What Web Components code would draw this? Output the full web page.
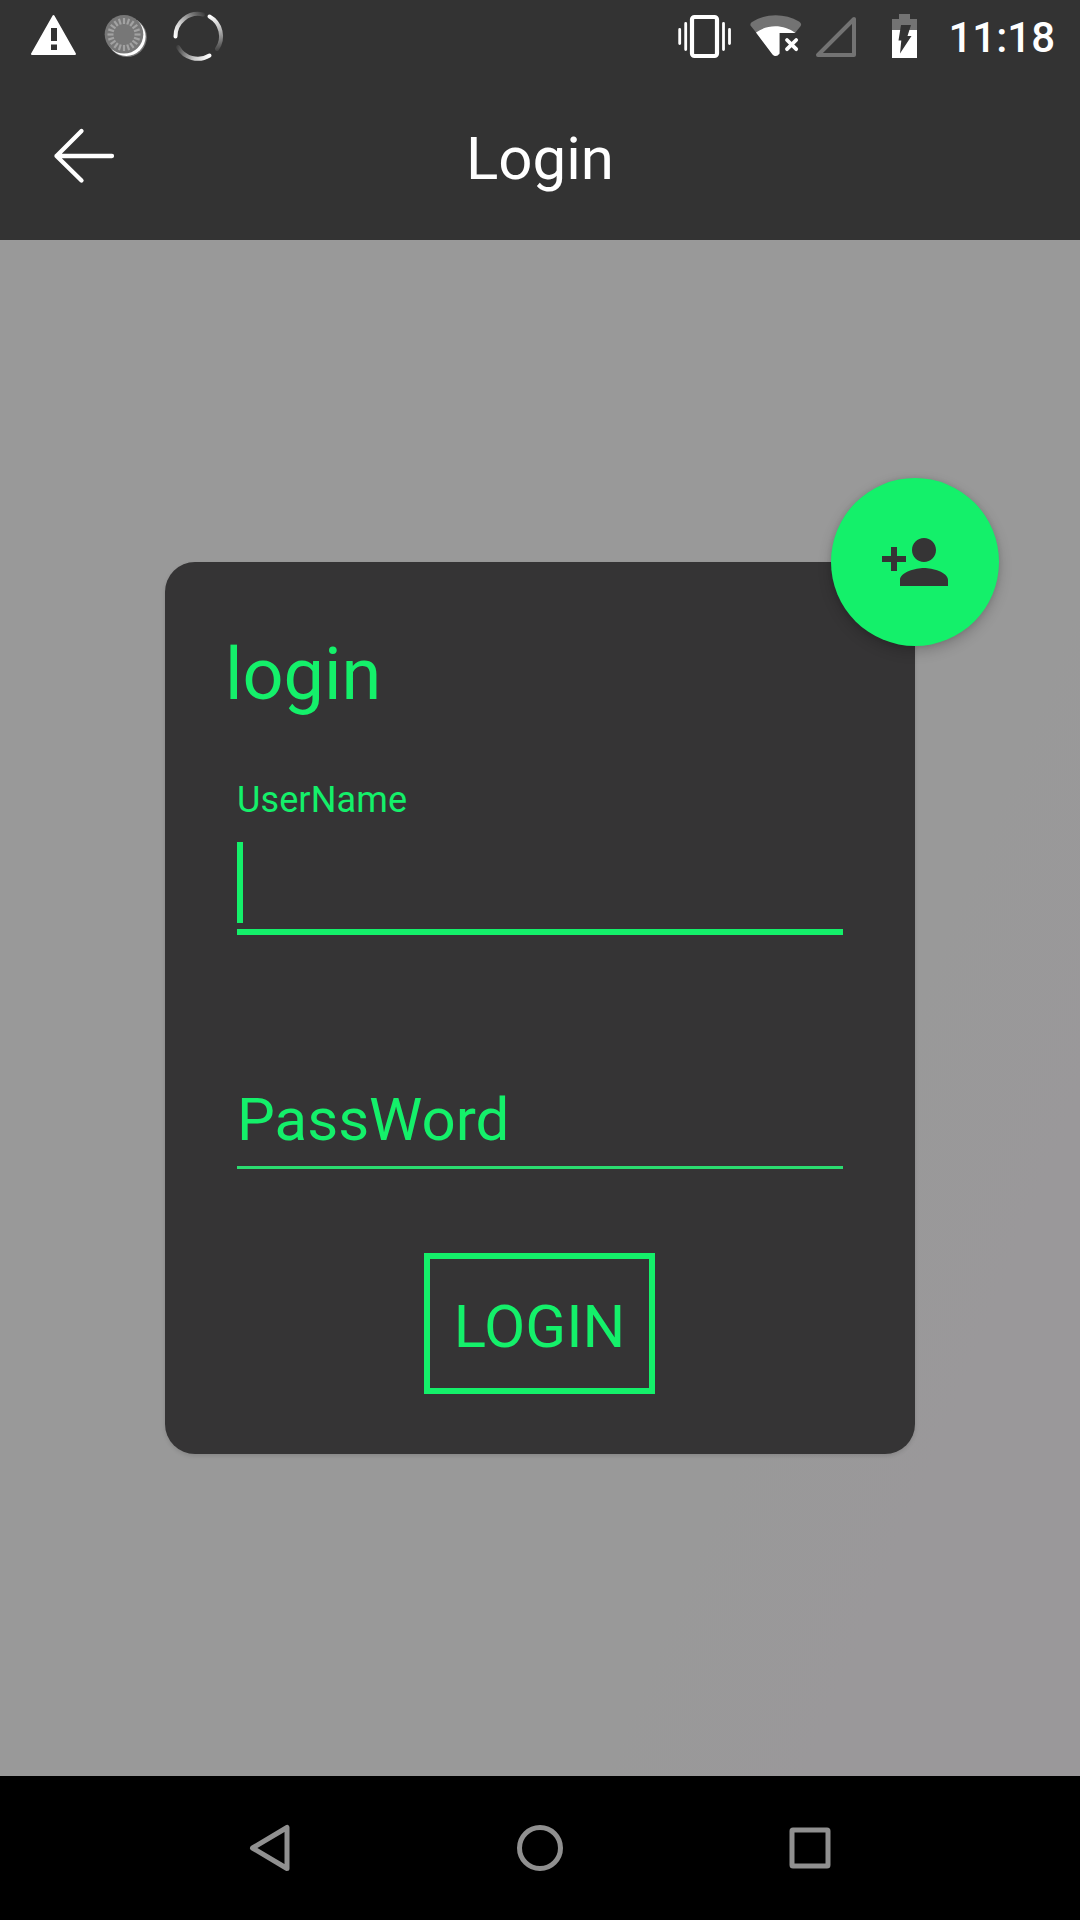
<!DOCTYPE html>
<html lang="en">
<head>
<meta charset="utf-8">
<title>Login</title>
<style>
html,body{margin:0;padding:0}
body{width:1080px;height:1920px;overflow:hidden;font-family:Roboto,"Noto Sans",sans-serif;background:#999}
</style>
</head>
<body>
<login-screen></login-screen>
<script>
const define = (name, html) => {
  const t = document.createElement('template');
  t.innerHTML = html;
  customElements.define(name, class extends HTMLElement {
    constructor() {
      super();
      this.attachShadow({mode: 'open'}).appendChild(t.content.cloneNode(true));
    }
  });
};

// Circular dial badge: ring of short radial ticks
let ticks = '';
for (let i = 0; i < 20; i++) ticks += `<path d="M124 18v6" transform="rotate(${i * 18} 124 34.5)"/>`;

define('status-bar', `
<style>
:host{display:flex;justify-content:space-between;height:72px;background:#333;color:#fff}
svg{display:block;flex:none}
.right{display:flex;padding-right:25px}
.time{width:105px;display:flex;justify-content:flex-end;font-size:42px;font-weight:500;line-height:75px;white-space:nowrap}
</style>
<svg width="240" height="72" viewBox="0 0 240 72">
  <defs>
    <linearGradient id="a" gradientUnits="userSpaceOnUse" x1="176" y1="38" x2="205" y2="14"><stop offset="0" stop-color="#fff"/><stop offset=".35" stop-color="#ccc"/><stop offset="1" stop-color="#3c3c3c"/></linearGradient>
    <linearGradient id="b" gradientUnits="userSpaceOnUse" x1="210" y1="16" x2="217" y2="52"><stop offset="0" stop-color="#fff"/><stop offset=".4" stop-color="#bbb"/><stop offset="1" stop-color="#3c3c3c"/></linearGradient>
    <linearGradient id="c" gradientUnits="userSpaceOnUse" x1="210" y1="56" x2="177" y2="45"><stop offset="0" stop-color="#fff"/><stop offset=".4" stop-color="#ccc"/><stop offset="1" stop-color="#3c3c3c"/></linearGradient>
  </defs>
  <path d="M53.5 16 75 54H32Z" fill="#fff" stroke="#fff" stroke-width="2" stroke-linejoin="round"/>
  <path d="M51 28h6v13h-6zM51 44.500h6v5.500h-6z" fill="#333"/>
  <circle cx="127" cy="37.200" r="19.800" fill="#777"/>
  <circle cx="126.300" cy="36.600" r="19.300" fill="#fff"/>
  <circle cx="124" cy="34.300" r="19.300" fill="#777"/>
  <g stroke="#a2a2a2" stroke-width="2.200">${ticks}</g>
  <g fill="none" stroke-width="4" stroke-linecap="round">
    <path d="M175.500 36.500A22.500 22.500 0 0 1 203 14.500" stroke="url(#a)"/>
    <path d="M209.500 16.500A22.500 22.500 0 0 1 217 49" stroke="url(#b)"/>
    <path d="M209.500 55.500A22.500 22.500 0 0 1 178 47" stroke="url(#c)"/>
  </g>
</svg>
<div class="right">
<svg width="290" height="72" viewBox="660 0 290 72">
  <rect x="692" y="17" width="25" height="39" rx="2.500" fill="none" stroke="#fff" stroke-width="4.200"/>
  <path d="M685.700 23.500v26M679.700 29.500v14M723.500 23.500v26M729.500 29.500v14" stroke="#fff" stroke-width="2.800" stroke-linecap="round"/>
  <path d="M750.500 25.500C750 24 751 22.500 752.500 21.700 766 13 785 13 799 21.500 801 22.800 801.800 24.500 800.500 26.200L795 33H779.500V54Q775.500 58 772.500 54L756.500 33Z" fill="#737373"/>
  <path d="M756 32.500C767 24 784 24 795.500 33H779.500V53.500Q776 58 772.500 54.500Z" fill="#fff"/>
  <path d="M787 40l9.200 9.200M796.200 40l-9.200 9.200" stroke="#fff" stroke-width="3.800" stroke-linecap="round"/>
  <path d="M854 19v36h-36Z" fill="none" stroke="#737373" stroke-width="4" stroke-linejoin="round"/>
  <path d="M899 14h11v5h7v11.500h-25V19h7z" fill="#737373"/>
  <path d="M892 30h25v28h-25z" fill="#fff"/>
  <path d="M901 25h10l-3.500 11h4L900 53.500 901.300 40.500H898.500Z" fill="#333"/>
</svg>
<span class="time">11:18</span>
</div>`);

define('title-bar', `
<style>
:host{display:grid;grid-template-columns:168px 1fr 168px;height:168px;background:#333;color:#fff}
svg{display:block}
h1{margin:0;padding-top:5px;font-size:60px;font-weight:400;line-height:163px;text-align:center}
</style>
<svg width="168" height="168" viewBox="0 72 168 168"><path d="M81.500 131 56.500 156l25 24.500M56.500 156h55.500" fill="none" stroke="#fff" stroke-width="4.300" stroke-linecap="round" stroke-linejoin="round"/></svg>
<h1><slot></slot></h1>`);

define('text-field', `
<style>
:host{display:flex;flex-direction:column;width:606px;color:#14f06a}
.label{font-size:60px;line-height:71px;height:71px;padding-bottom:11px;white-space:nowrap}
.line{height:3px;background:#2bdc70}
.caret{display:none;width:6px;height:81px;margin:21px 0 6px;background:#14f06a}
:host([active]) .label{font-size:36px;line-height:42px;height:42px;padding:0;letter-spacing:.12px}
:host([active]) .caret{display:block}
:host([active]) .line{height:6px;background:#14f06a}
</style>
<div class="label"><slot></slot></div><div class="caret"></div><div class="line"></div>`);

define('outline-button', `
<style>
:host{display:block}
button{display:block;box-sizing:border-box;width:231px;height:141px;margin:0;padding:6px 0 0;border:6px solid #14f06a;border-radius:0;background:none;color:#14f06a;font:400 60px/123px Roboto,sans-serif;white-space:nowrap}
</style>
<button><slot></slot></button>`);

define('floating-button', `
<style>
:host{display:flex;align-items:center;justify-content:center;width:168px;height:168px;border-radius:50%;background:#14f06a;box-shadow:0 5px 14px rgba(0,0,0,.2),0 0 5px rgba(0,0,0,.1)}
</style>
<svg width="72" height="72" viewBox="0 0 24 24" fill="#353435"><path d="M15 12c2.210 0 4-1.790 4-4s-1.790-4-4-4-4 1.790-4 4 1.790 4 4 4zm-9-2V7H4v3H1v2h3v3h2v-3h3v-2H6zm9 4c-2.670 0-8 1.340-8 4v2h16v-2c0-2.660-5.330-4-8-4z"/></svg>`);

define('login-card', `
<style>
:host{display:flex;flex-direction:column;position:relative;box-sizing:border-box;width:750px;height:892px;padding:71px 60px 60px;border-radius:30px;background:#353435;box-shadow:0 2px 4px rgba(0,0,0,.12)}
h2{margin:0 0 62px;font-size:72px;font-weight:400;line-height:84px;color:#14f06a}
text-field{margin-left:12px}
.second{margin-top:149px}
outline-button{align-self:center;margin-top:84px;margin-left:-1px}
floating-button{position:absolute;top:-84px;right:-84px}
</style>
<h2>login</h2>
<text-field active>UserName</text-field>
<text-field class="second">PassWord</text-field>
<outline-button>LOGIN</outline-button>
<floating-button></floating-button>`);

define('nav-bar', `
<style>
:host{display:flex;justify-content:center;height:144px;background:#000}
svg{display:block;width:270px;height:144px;fill:none;stroke:#909090;stroke-width:5;stroke-linejoin:round}
</style>
<svg viewBox="135 1776 270 144"><path d="M287 1827.500v41L252.500 1848Z"/></svg>
<svg viewBox="405 1776 270 144"><circle cx="540" cy="1848" r="20.500"/></svg>
<svg viewBox="675 1776 270 144"><rect x="792" y="1830" width="36" height="36" rx="1"/></svg>`);

define('login-screen', `
<style>
:host{display:flex;flex-direction:column;width:1080px;height:1920px}
main{flex:1;display:flex;justify-content:center;align-items:flex-start;padding-top:322px;background:linear-gradient(112deg,#999 72%,#9a989a 84%)}
</style>
<status-bar></status-bar>
<title-bar>Login</title-bar>
<main><login-card></login-card></main>
<nav-bar></nav-bar>`);
</script>
</body>
</html>
